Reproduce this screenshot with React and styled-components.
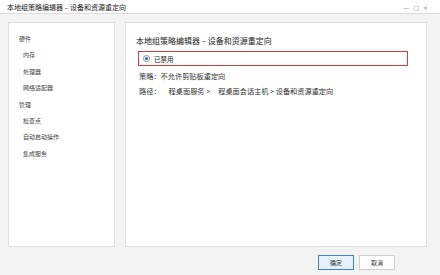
import React from 'react'
import styled, { createGlobalStyle } from 'styled-components'

const GlobalStyle = createGlobalStyle`
  html, body {
    margin: 0;
    padding: 0;
    background: #f3f3f3;
  }
  body {
    font-family: "Noto Sans CJK SC", "Noto Sans", sans-serif;
    color: #333;
  }
`

const Window = styled.div`
  width: 440px;
  height: 275px;
  display: flex;
  flex-direction: column;
  background: #f3f3f3;
  overflow: hidden;
`

const TitleBar = styled.div`
  height: 12px;
  flex: none;
  display: flex;
  align-items: center;
  justify-content: space-between;
  padding: 1px 12px 0 7px;
  background: #fff;
  border-bottom: 1px solid #dcdcdc;
  font-size: 7px;
  color: #222;
`

const Controls = styled.div`
  display: flex;
  align-items: center;
  gap: 4px;
  color: #888;
  font-size: 6px;
  font-family: "DejaVu Sans", sans-serif;
`

const Body = styled.div`
  display: flex;
  gap: 10px;
  padding: 8px 13px 0 8px;
`

const Panel = styled.div`
  box-sizing: border-box;
  height: 225px;
  background: #fff;
  border: 1px solid #dedede;
  width: ${p => p.$w}px;
`

const NavList = styled.div`
  display: flex;
  flex-direction: column;
  padding-top: 8px;
`

const NavItem = styled.div`
  height: 16.4px;
  line-height: 16.4px;
  font-size: 6px;
  color: #444;
  padding-left: ${p => (p.$sub ? 14 : 10)}px;
`

const Content = styled.div`
  display: flex;
  flex-direction: column;
  padding: 11px 18px 0 10px;
`

const Heading = styled.div`
  font-size: 8px;
  line-height: 14px;
  color: #222;
  margin-bottom: 3px;
`

const Option = styled.label`
  box-sizing: border-box;
  height: 15px;
  margin-left: 2px;
  margin-bottom: 3px;
  display: flex;
  align-items: center;
  gap: 4px;
  padding-left: 4px;
  border: 1.5px solid #d93a3a;
  font-size: 6.5px;
  color: #222;
`

const Radio = styled.span`
  box-sizing: border-box;
  width: 7px;
  height: 7px;
  border-radius: 50%;
  border: 1px solid #8a8a8a;
  display: flex;
  align-items: center;
  justify-content: center;
  &::after {
    content: '';
    width: 3px;
    height: 3px;
    border-radius: 50%;
    background: #1a6fd1;
  }
`

const Line = styled.div`
  font-size: 7.2px;
  line-height: 15px;
  color: #333;
  margin-left: 3px;
  white-space: pre;
`

const Footer = styled.div`
  display: flex;
  justify-content: flex-end;
  gap: 5px;
  padding: 8px 45px 0 0;
`

const Button = styled.button`
  box-sizing: border-box;
  width: 36px;
  height: 15px;
  padding: 0;
  font-family: inherit;
  font-size: 6px;
  color: #333;
  background: ${p => (p.$primary ? '#e5f1fb' : '#fdfdfd')};
  border: 1px solid ${p => (p.$primary ? '#3d84c8' : '#cfcfcf')};
`

const nav = [
  { label: '硬件' },
  { label: '内存', sub: true },
  { label: '处理器', sub: true },
  { label: '网络适配器', sub: true },
  { label: '管理' },
  { label: '检查点', sub: true },
  { label: '自动启动操作', sub: true },
  { label: '集成服务', sub: true },
]

const App = () => (
  <Window>
    <GlobalStyle />
    <TitleBar>
      <span>本地组策略编辑器 – 设备和资源重定向</span>
      <Controls>
        <span>—</span>
        <span>□</span>
        <span>×</span>
      </Controls>
    </TitleBar>
    <Body>
      <Panel $w={107}>
        <NavList>
          {nav.map(item => (
            <NavItem key={item.label} $sub={item.sub}>
              {item.label}
            </NavItem>
          ))}
        </NavList>
      </Panel>
      <Panel $w={302}>
        <Content>
          <Heading>本地组策略编辑器 – 设备和资源重定向</Heading>
          <Option>
            <Radio />
            已禁用
          </Option>
          <Line>策略：不允许剪贴板重定向</Line>
          <Line>{'路径：     程桌面服务 >     程桌面会话主机 > 设备和资源重定向'}</Line>
        </Content>
      </Panel>
    </Body>
    <Footer>
      <Button $primary>确定</Button>
      <Button>取消</Button>
    </Footer>
  </Window>
)

export default App
